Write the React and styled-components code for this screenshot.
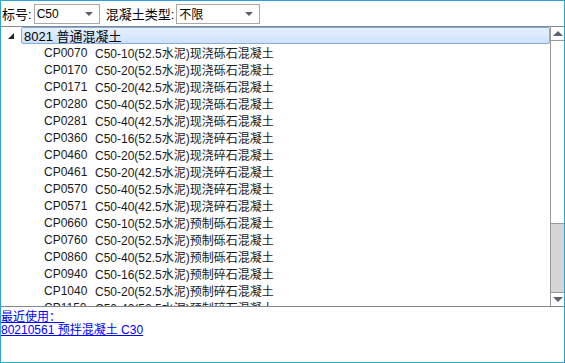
import React from 'react';
import styled, { createGlobalStyle } from 'styled-components';

const GlobalStyle = createGlobalStyle`
  html, body {
    margin: 0;
    padding: 0;
    background: #fff;
  }
  body {
    font-family: "Liberation Sans", "Noto Sans CJK SC", sans-serif;
    font-size: 12px;
    color: #000;
  }
`;

const items = [
  ['CP0070', 'C50-10(52.5水泥)现浇砾石混凝土'],
  ['CP0170', 'C50-20(52.5水泥)现浇砾石混凝土'],
  ['CP0171', 'C50-20(42.5水泥)现浇砾石混凝土'],
  ['CP0280', 'C50-40(52.5水泥)现浇砾石混凝土'],
  ['CP0281', 'C50-40(42.5水泥)现浇砾石混凝土'],
  ['CP0360', 'C50-16(52.5水泥)现浇碎石混凝土'],
  ['CP0460', 'C50-20(52.5水泥)现浇碎石混凝土'],
  ['CP0461', 'C50-20(42.5水泥)现浇碎石混凝土'],
  ['CP0570', 'C50-40(52.5水泥)现浇碎石混凝土'],
  ['CP0571', 'C50-40(42.5水泥)现浇碎石混凝土'],
  ['CP0660', 'C50-10(52.5水泥)预制砾石混凝土'],
  ['CP0760', 'C50-20(52.5水泥)预制砾石混凝土'],
  ['CP0860', 'C50-40(52.5水泥)预制砾石混凝土'],
  ['CP0940', 'C50-16(52.5水泥)预制碎石混凝土'],
  ['CP1040', 'C50-20(52.5水泥)预制碎石混凝土'],
  ['CP1150', 'C50-40(52.5水泥)预制碎石混凝土']
];

const Frame = styled.div`
  width: 565px;
  height: 363px;
  box-sizing: border-box;
  border: 1px solid #2ea3d6;
  display: flex;
  flex-direction: column;
  overflow: hidden;
`;

const Toolbar = styled.div`
  height: 25px;
  display: flex;
  align-items: center;
  padding: 0 0 0 1px;
  box-sizing: border-box;
`;

const Label = styled.span`
  font-size: 13px;
  margin-right: 2px;
  white-space: nowrap;
`;

const Combo = styled.div`
  width: ${(p) => p.width}px;
  height: 20px;
  box-sizing: border-box;
  border: 1px solid #a9a9a9;
  display: flex;
  align-items: center;
  justify-content: space-between;
  padding: 0 6px 0 2px;
  margin-right: ${(p) => p.mr || 0}px;
  font-size: 12px;
`;

const Caret = styled.span`
  width: 0;
  height: 0;
  border-left: 4px solid transparent;
  border-right: 4px solid transparent;
  border-top: 4px solid #5a5f6a;
`;

const TreeBox = styled.div`
  height: 281px;
  flex: none;
  margin: 0 -1px;
  box-sizing: border-box;
  border: 1px solid #828790;
  display: flex;
`;

const List = styled.div`
  flex: 1;
  overflow: hidden;
`;

const GroupRow = styled.div`
  height: 17px;
  display: flex;
  align-items: center;
`;

const Expander = styled.span`
  width: 0;
  height: 0;
  margin: 0 7px;
  border-left: 6px solid transparent;
  border-bottom: 6px solid #262626;
`;

const GroupLabel = styled.div`
  flex: 1;
  height: 17px;
  box-sizing: border-box;
  border: 1px solid #84acdd;
  border-radius: 2px;
  background: linear-gradient(#e6f0fc, #cde2fa);
  padding-left: 2px;
  display: flex;
  align-items: center;
  font-size: 13px;
`;

const ItemRow = styled.div`
  height: 17px;
  display: flex;
  align-items: center;
  padding-left: 43px;
  white-space: nowrap;
  color: #1a1a1a;
`;

const Code = styled.span`
  width: 51px;
`;

const ScrollBar = styled.div`
  width: 13px;
  display: flex;
  flex-direction: column;
  border-left: 1px solid #9a9a9a;
  background: #d6d6d6;
`;

const ArrowButton = styled.div`
  height: 13px;
  background: #fff;
  border-bottom: ${(p) => (p.down ? 'none' : '1px solid #9a9a9a')};
  border-top: ${(p) => (p.down ? '1px solid #9a9a9a' : 'none')};
  display: flex;
  align-items: center;
  justify-content: center;
  margin-top: ${(p) => (p.down ? 'auto' : '0')};
`;

const Tri = styled.span`
  width: 0;
  height: 0;
  border-left: 5px solid transparent;
  border-right: 5px solid transparent;
  ${(p) =>
    p.down
      ? 'border-top: 5px solid #5c6270;'
      : 'border-bottom: 5px solid #5c6270;'}
`;

const Thumb = styled.div`
  height: 182px;
  background: #fff;
  border-bottom: 1px solid #9a9a9a;
`;

const Recent = styled.div`
  flex: 1;
  padding-top: 4px;
  display: flex;
  flex-direction: column;
`;

const RecentLink = styled.a`
  display: block;
  color: #0000ff;
  text-decoration: underline;
  font-size: 12px;
  line-height: 13px;
  height: 13px;
  align-self: flex-start;
  white-space: pre;
  cursor: pointer;
`;

export default function App() {
  return (
    <>
      <GlobalStyle />
      <Frame>
        <Toolbar>
          <Label>标号:</Label>
          <Combo width={66} mr={6}>
            <span>C50</span>
            <Caret />
          </Combo>
          <Label>混凝土类型:</Label>
          <Combo width={84}>
            <span>不限</span>
            <Caret />
          </Combo>
        </Toolbar>
        <TreeBox>
          <List>
            <GroupRow>
              <Expander />
              <GroupLabel>8021 普通混凝土</GroupLabel>
            </GroupRow>
            {items.map(([code, name]) => (
              <ItemRow key={code}>
                <Code>{code}</Code>
                <span>{name}</span>
              </ItemRow>
            ))}
          </List>
          <ScrollBar>
            <ArrowButton>
              <Tri />
            </ArrowButton>
            <Thumb />
            <ArrowButton down>
              <Tri down />
            </ArrowButton>
          </ScrollBar>
        </TreeBox>
        <Recent>
          <RecentLink>最近使用： </RecentLink>
          <RecentLink>80210561 预拌混凝土 C30</RecentLink>
        </Recent>
      </Frame>
    </>
  );
}
